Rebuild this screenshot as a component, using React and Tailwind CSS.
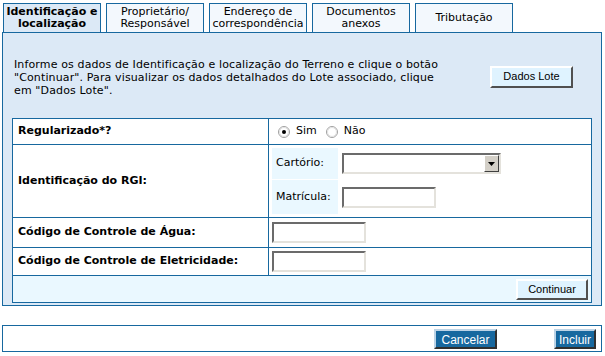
import React from "react";

const Radio = ({ checked }) => (
  <svg width="12" height="12" viewBox="0 0 12 12" className="block">
    <circle cx="6" cy="6" r="5.5" fill="#ffffff" stroke="#a0a0a0" />
    <circle cx="6" cy="6" r="4.5" fill="#ffffff" stroke="#e0e0e0" />
    {checked && <circle cx="6" cy="6" r="2" fill="#000" />}
  </svg>
);

const Sunken = ({ className }) => (
  <div className={"border-2 border-t-[#6b6b6b] border-l-[#6b6b6b] border-b-[#e4e2dc] border-r-[#e4e2dc] bg-white " + className} />
);

export default function App() {
  const tabs = [
    ["Identificação e", "localização", true],
    ["Proprietário/", "Responsável", false],
    ["Endereço de", "correspondência", false],
    ["Documentos", "anexos", false],
    ["Tributação", null, false],
  ];
  return (
    <div className="w-[605px] h-[356px] bg-white text-[11px] text-black font-['DejaVu_Sans',sans-serif] overflow-hidden">
      <div className="flex gap-[5px] pl-[3px] pt-[3px] h-[32px]">
        {tabs.map(([a, b, active], i) => (
          <div
            key={i}
            className={
              "w-[98px] h-[29px] border border-b-0 border-[#17689f] flex flex-col items-center justify-center leading-[12px] text-center " +
              (active ? "bg-[#dce9f6] font-bold" : "bg-[#f3f8fd]")
            }
          >
            <span>{a}</span>
            {b && <span>{b}</span>}
          </div>
        ))}
      </div>
      <div className="ml-[2px] w-[600px] h-[274px] border border-[#17689f] bg-[#dce9f6] pl-[9px] pr-[9px]">
        <div className="flex items-center h-[85px] pl-[2px]">
          <p className="w-[455px] shrink-0 leading-[13px] pt-[3px] tracking-[0.13px]">
            Informe os dados de Identificação e localização do Terreno e clique o botão<br />
            "Continuar". Para visualizar os dados detalhados do Lote associado, clique<br />
            em "Dados Lote".
          </p>
          <button className="ml-[21px] mt-[2px] w-[83px] h-[22px] bg-[#dff3ff] border-2 border-t-white border-l-white border-b-[#505050] border-r-[#505050] font-['Liberation_Sans',sans-serif] text-[11px]">
            Dados Lote
          </button>
        </div>
        <div className="border border-[#17689f] bg-white">
          <div className="flex h-[26px] border-b border-[#17689f]">
            <div className="w-[256px] border-r border-[#17689f] flex items-center pl-[5px] font-bold">Regularizado*?</div>
            <div className="flex items-center pl-[9px]">
              <Radio checked />
              <span className="ml-[6px]">Sim</span>
              <span className="ml-[9px]"><Radio /></span>
              <span className="ml-[6px]">Não</span>
            </div>
          </div>
          <div className="flex h-[73px] border-b border-[#17689f]">
            <div className="w-[256px] border-r border-[#17689f] flex items-center pl-[5px] font-bold">Identificação do RGI:</div>
            <div className="flex flex-col pl-[3px] pt-[3px] gap-[1px]">
              <div className="flex h-[31px] items-center">
                <div className="w-[66px] h-full bg-[#eaf8ff] flex items-center pl-[4px]">Cartório:</div>
                <div className="ml-[4px] w-[159px] h-[21px] border-2 border-t-[#6b6b6b] border-l-[#6b6b6b] border-b-[#e4e2dc] border-r-[#e4e2dc] bg-white flex justify-end">
                  <div className="w-[15px] h-full bg-[#d4d0c8] border border-t-white border-l-white border-b-[#404040] border-r-[#404040] flex items-center justify-center">
                    <svg width="7" height="4" viewBox="0 0 7 4"><path d="M0 0h7L3.5 4z" fill="#000" /></svg>
                  </div>
                </div>
              </div>
              <div className="flex h-[34px] items-center">
                <div className="w-[66px] h-full bg-[#eaf8ff] flex items-center pl-[4px]">Matrícula:</div>
                <Sunken className="ml-[4px] w-[94px] h-[21px]" />
              </div>
            </div>
          </div>
          <div className="flex h-[30px] border-b border-[#17689f]">
            <div className="w-[256px] border-r border-[#17689f] flex items-center pl-[5px] font-bold">Código de Controle de Água:</div>
            <div className="flex items-center pl-[3px]">
              <Sunken className="w-[94px] h-[21px]" />
            </div>
          </div>
          <div className="flex h-[28px] border-b border-[#17689f]">
            <div className="w-[256px] border-r border-[#17689f] flex items-center pl-[5px] font-bold">Código de Controle de Eletricidade:</div>
            <div className="flex items-center pl-[3px]">
              <Sunken className="w-[94px] h-[21px]" />
            </div>
          </div>
          <div className="flex h-[26px] bg-[#eaf8ff] items-center justify-end pr-[3px]">
            <button className="w-[72px] h-[21px] bg-[#dff3ff] border-2 border-t-white border-l-white border-b-[#505050] border-r-[#505050] font-['Liberation_Sans',sans-serif] text-[11px]">
              Continuar
            </button>
          </div>
        </div>
      </div>
      <div className="ml-[2px] mt-[19px] w-[600px] h-[27px] border border-[#17689f] flex items-center justify-end pr-[5px]">
        <button className="w-[63px] h-[20px] bg-[#17689f] text-white border-2 border-t-[#bcd3e6] border-l-[#bcd3e6] border-b-[#303030] border-r-[#303030] font-['Liberation_Sans',sans-serif] text-[12px]">
          Cancelar
        </button>
        <button className="ml-[57px] w-[42px] h-[20px] bg-[#17689f] text-white border-2 border-t-[#bcd3e6] border-l-[#bcd3e6] border-b-[#303030] border-r-[#303030] font-['Liberation_Sans',sans-serif] text-[12px]">
          Incluir
        </button>
      </div>
    </div>
  );
}
